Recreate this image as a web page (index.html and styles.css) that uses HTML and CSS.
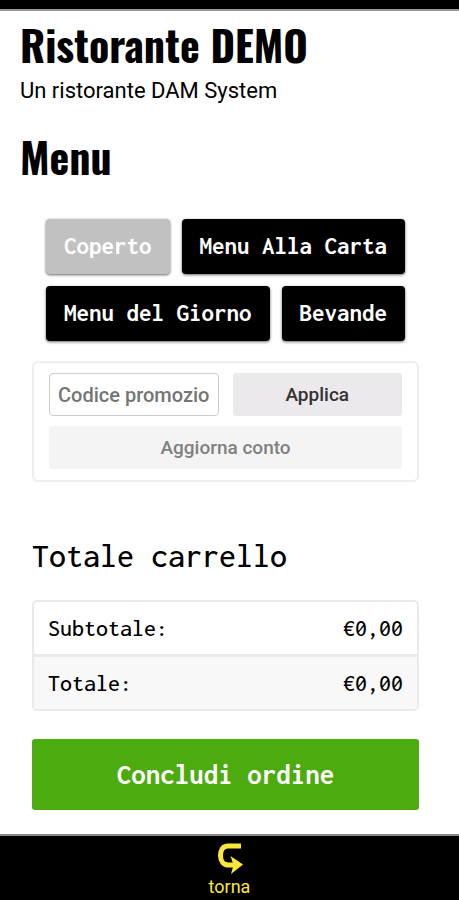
FILE: index.html
```html
<!DOCTYPE html>
<html lang="it">
<head>
<meta charset="utf-8">
<meta name="viewport" content="width=device-width, initial-scale=1">
<title>Ristorante DEMO</title>
<link rel="stylesheet" href="styles.css">
</head>
<body>
<div class="topbar"></div>
<main class="page">
  <header class="intro">
    <h1 class="heading">Ristorante DEMO</h1>
    <p class="tagline">Un ristorante DAM System</p>
  </header>
  <h2 class="heading">Menu</h2>
  <div class="content">
    <nav class="categories">
      <a class="category category-muted" href="#coperto">Coperto</a>
      <a class="category" href="#carta">Menu Alla Carta</a>
      <a class="category" href="#giorno">Menu del Giorno</a>
      <a class="category" href="#bevande">Bevande</a>
    </nav>
    <form class="coupon">
      <input class="coupon-code" type="text" aria-label="Codice promozionale" placeholder="Codice promozionale">
      <button class="coupon-button" type="button">Applica</button>
      <button class="coupon-button coupon-update" type="button" disabled>Aggiorna conto</button>
    </form>
    <h3 class="cart-title">Totale carrello</h3>
    <table class="totals">
      <tr><th scope="row">Subtotale:</th><td>€0,00</td></tr>
      <tr><th scope="row">Totale:</th><td>€0,00</td></tr>
    </table>
    <a class="checkout" href="#ordine">Concludi ordine</a>
  </div>
</main>
<footer class="bottombar">
  <a class="back" href="#torna">
    <svg class="back-icon" viewBox="0 0 26 32" aria-hidden="true">
      <path d="M24 3H11C6 3 3.500 7 3.500 12.500C3.500 18 6.500 22 11.500 22H19" fill="none" stroke="currentColor" stroke-width="5"/>
      <path d="M13.500 13L26 21.500L14 31L16.500 22Z" fill="currentColor"/>
    </svg>
    <span>torna</span>
  </a>
</footer>
</body>
</html>
```
FILE: styles.css
```css
* {
  box-sizing: border-box;
}

body {
  margin: 0;
  min-height: 100vh;
  display: flex;
  flex-direction: column;
  background: #fff;
  color: #000;
  font-family: Roboto, sans-serif;
}

.topbar {
  height: 11px;
  background: #000;
  border-bottom: 2px solid #999;
}

.page {
  flex: 1;
  padding: 4px 20px 24px;
}

h1, h2, h3, p {
  margin: 0;
}

.heading {
  font: bold 42px/58px Oswald, "Liberation Sans Narrow", sans-serif;
}

.tagline {
  margin-bottom: 18px;
  font-size: 22px;
  line-height: 36px;
}

.content {
  padding: 34px 20px 0 12px;
}

.categories {
  display: flex;
  flex-wrap: wrap;
  justify-content: center;
  gap: 12px;
  margin-bottom: 20px;
}

.category {
  padding: 0 18px;
  border-radius: 4px;
  background: #000;
  box-shadow: 0 1px 3px #0009;
  color: #fff;
  font: bold 25px/55px Inconsolata, "DejaVu Sans Mono", monospace;
  text-decoration: none;
}

.category-muted {
  background: #c1c1c1;
}

.coupon {
  display: grid;
  grid-template-columns: 1fr 1fr;
  gap: 10px 14px;
  padding: 10px 15px 11px;
  border: 2px solid #eee;
  border-radius: 6px;
}

.coupon-code,
.coupon-button {
  min-width: 0;
  height: 43px;
  border: 0;
  border-radius: 3px;
  font: 500 19px/24px Roboto, sans-serif;
}

.coupon-code {
  padding: 0 8px;
  border: 1px solid #ccc;
  border-radius: 4px;
  background: #fff;
  font-size: 20px;
}

.coupon-code::placeholder {
  color: #757575;
}

.coupon-button {
  background: #ebe9eb;
  color: #333;
}

.coupon-update {
  grid-column: 1 / -1;
  background: #f4f4f4;
  color: #808080;
}

.cart-title {
  margin: 56px 0 26px;
  font: 500 34px/36px Inconsolata, "DejaVu Sans Mono", monospace;
}

.totals {
  width: 100%;
  border: 2px solid #eaeaea;
  border-radius: 5px;
  border-spacing: 0;
  font: 24px/28px Inconsolata, "DejaVu Sans Mono", monospace;
}

.totals th,
.totals td {
  padding: 12px 14px;
  font-weight: 500;
  text-align: left;
}

.totals td {
  text-align: right;
}

.totals tr + tr th,
.totals tr + tr td {
  border-top: 3px solid #eaeaea;
  background: #f8f8f8;
}

.checkout {
  display: block;
  margin-top: 28px;
  border-radius: 3px;
  background: #4cab0e;
  color: #fff;
  font: bold 29px/71px Inconsolata, "DejaVu Sans Mono", monospace;
  text-align: center;
  text-decoration: none;
}

.bottombar {
  display: flex;
  justify-content: center;
  border-top: 2px solid #888;
  background: #000;
}

.back {
  display: flex;
  flex-direction: column;
  align-items: center;
  padding: 7px 0 1px;
  color: #f9e83a;
  font-size: 18px;
  line-height: 24px;
  text-decoration: none;
}

.back-icon {
  width: 26px;
  height: 32px;
}
```
